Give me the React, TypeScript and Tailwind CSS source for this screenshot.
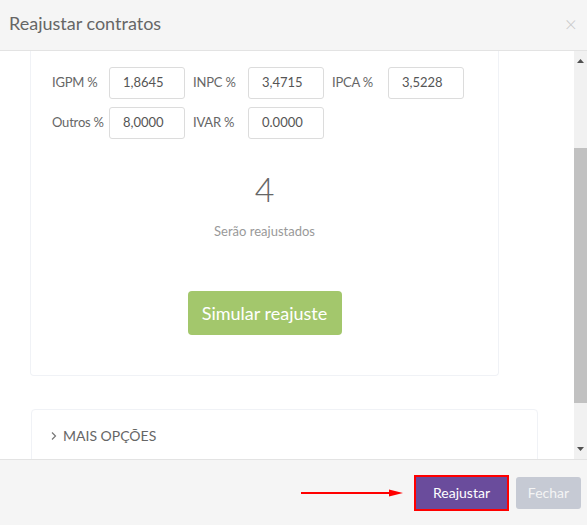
import React from "react";

const font = { fontFamily: "Lato, 'Open Sans', sans-serif" };

function Field({ label, value, lw }: { label: string; value: string; lw: string }) {
  return (
    <div className="flex items-center">
      <span className={`${lw} text-[13px] tracking-[-0.2px] text-[#666] whitespace-nowrap`}>{label}</span>
      <div className="w-[76px] h-[32px] border border-[#dcdcdc] rounded-[3px] flex items-center pl-[13px] text-[13px] text-[#555] bg-white">
        {value}
      </div>
    </div>
  );
}

export default function App() {
  return (
    <div className="w-[587px] h-[525px] bg-white flex flex-col overflow-hidden" style={font}>
      {/* Header */}
      <div className="h-[51px] shrink-0 bg-[#f5f5f5] border-b border-[#e3e3e3] flex items-center justify-between pl-[9px] pr-[10px] pb-[4px]">
        <span className="text-[18px] text-[#666]">Reajustar contratos</span>
        <span className="text-[21px] text-[#c8c8c8] leading-none font-light">×</span>
      </div>

      {/* Body */}
      <div className="flex-1 flex min-h-0">
        <div className="flex-1 overflow-hidden pl-[30px]">
          <div className="w-[469px] border-x border-b border-[#f0f2f6] rounded-b-[4px] pt-[16px] pb-[40px] pl-[21px]">
            <div className="flex flex-col gap-[8px]">
              <div className="flex gap-[8px]">
                <Field label="IGPM %" value="1,8645" lw="w-[57px]" />
                <Field label="INPC %" value="3,4715" lw="w-[55px]" />
                <Field label="IPCA %" value="3,5228" lw="w-[56px]" />
              </div>
              <div className="flex gap-[8px]">
                <Field label="Outros %" value="8,0000" lw="w-[57px]" />
                <Field label="IVAR %" value="0.0000" lw="w-[55px]" />
              </div>
            </div>
            <div className="flex flex-col items-center -ml-[21px] mt-[30px]">
              <div className="text-[34px] leading-[40px] text-[#666] font-light">4</div>
              <div className="mt-[13px] text-[13px] leading-[18px] text-[#999]">Serão reajustados</div>
              <button className="mt-[51px] w-[154px] h-[44px] rounded-[4px] bg-[#a3c76c] text-white text-[18px] font-normal">
                Simular reajuste
              </button>
            </div>
          </div>
          <div className="ml-[1px] mt-[33px] w-[507px] h-[80px] border border-[#f0f2f6] rounded-[4px] pl-[18px] pt-[15px]">
            <div className="flex items-center gap-[5px] text-[14px] text-[#666]">
              <svg width="8" height="10" viewBox="0 0 8 10" className="text-[#777]">
                <path d="M2 1.5 L5.5 5 L2 8.5" fill="none" stroke="currentColor" strokeWidth="1.2" />
              </svg>
              <span>MAIS OPÇÕES</span>
            </div>
          </div>
        </div>
        {/* Scrollbar */}
        <div className="w-[13px] shrink-0 bg-[#f1f1f1] flex flex-col items-center">
          <div className="h-[20px] flex items-center justify-center">
            <svg width="7" height="4" viewBox="0 0 7 4"><path d="M0 4 L3.5 0 L7 4 Z" fill="#505050" /></svg>
          </div>
          <div className="mt-[77px] w-[13px] h-[255px] bg-[#c1c1c1]" />
          <div className="flex-1" />
          <div className="h-[20px] flex items-center justify-center">
            <svg width="7" height="4" viewBox="0 0 7 4"><path d="M0 0 L7 0 L3.5 4 Z" fill="#505050" /></svg>
          </div>
        </div>
      </div>

      {/* Footer */}
      <div className="h-[66px] shrink-0 bg-[#f5f5f5] border-t border-[#e3e3e3] flex items-center justify-end pr-[6px] gap-[7px]">
        <svg width="102" height="10" viewBox="0 0 102 10" className="mr-[4px]">
          <line x1="0" y1="5" x2="90" y2="5" stroke="#f00" strokeWidth="2" />
          <path d="M88 1.5 L102 5 L88 8.5 Z" fill="#f00" />
        </svg>
        <div className="border-[2px] border-[#ff0000]">
          <button className="w-[91px] h-[32px] bg-[#6a4c9c] text-white text-[14px]">Reajustar</button>
        </div>
        <button className="w-[65px] h-[32px] rounded-[3px] bg-[#c6cad4] text-[#f4f4f4] text-[14px]">Fechar</button>
      </div>
    </div>
  );
}
